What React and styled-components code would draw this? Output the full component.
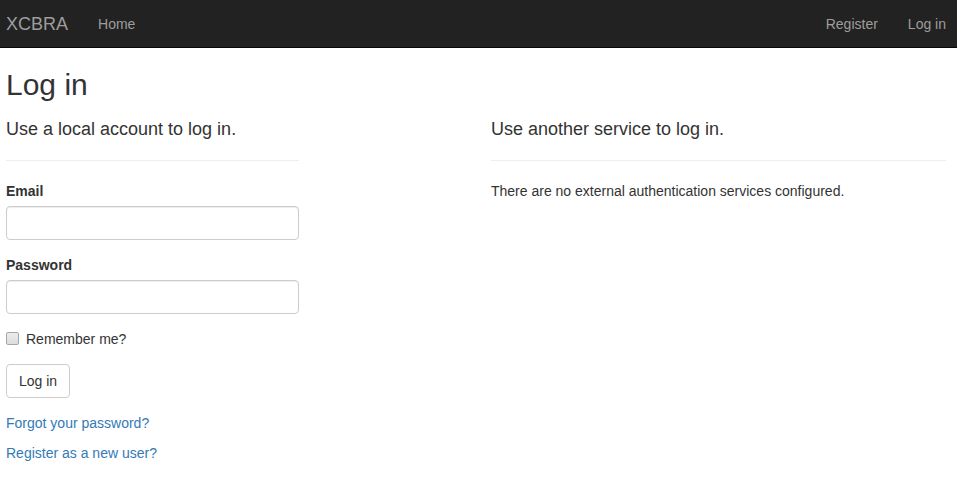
import React from "react";
import styled, { createGlobalStyle } from "styled-components";

const GlobalStyle = createGlobalStyle`
  html, body {
    margin: 0;
    padding: 0;
    background: #fff;
  }
  body {
    font-family: "Liberation Sans", Arial, Helvetica, sans-serif;
    font-size: 14px;
    line-height: 1.42857143;
    color: #333;
  }
  * {
    box-sizing: border-box;
  }
`;

const Navbar = styled.nav`
  height: 48px;
  background: #222;
  border-bottom: 1px solid #080808;
  display: flex;
  align-items: center;
  justify-content: space-between;
  padding: 0 11px 0 6px;
`;

const NavGroup = styled.div`
  display: flex;
  align-items: center;
  gap: 30px;
`;

const Brand = styled.a`
  color: #9d9d9d;
  font-size: 18px;
  line-height: 20px;
  text-decoration: none;
`;

const NavLink = styled.a`
  color: #9d9d9d;
  font-size: 14px;
  line-height: 20px;
  text-decoration: none;
`;

const Page = styled.main`
  padding: 0 11px 20px 6px;
`;

const Title = styled.h2`
  font-size: 30px;
  font-weight: 500;
  line-height: 1.1;
  margin: 20px 0 19px;
`;

const Columns = styled.div`
  display: grid;
  grid-template-columns: 293px 1fr;
  column-gap: 192px;
  align-items: start;
`;

const Section = styled.section`
  display: flex;
  flex-direction: column;
`;

const SubTitle = styled.h4`
  font-size: 18px;
  font-weight: 500;
  line-height: 1.1;
  margin: 0;
`;

const Rule = styled.hr`
  border: 0;
  border-top: 1px solid #eee;
  margin: 20px 0;
`;

const FormGroup = styled.div`
  margin-bottom: 15px;
`;

const Label = styled.label`
  display: block;
  font-weight: 700;
  margin-bottom: 5px;
`;

const Input = styled.input`
  display: block;
  width: 100%;
  height: 34px;
  padding: 6px 12px;
  font: inherit;
  color: #555;
  background: #fff;
  border: 1px solid #ccc;
  border-radius: 4px;
  box-shadow: inset 0 1px 1px rgba(0, 0, 0, 0.075);
`;

const CheckLabel = styled.label`
  display: flex;
  align-items: center;
  gap: 7px;
  line-height: 20px;
  cursor: pointer;
`;

const CheckBox = styled.input`
  appearance: none;
  margin: 0;
  width: 13px;
  height: 13px;
  border: 1px solid #a6a6a6;
  border-radius: 2px;
  background: linear-gradient(#ededed, #dcdcdc);
`;

const Button = styled.button`
  height: 34px;
  padding: 6px 12px;
  font: inherit;
  color: #333;
  background: #fff;
  border: 1px solid #ccc;
  border-radius: 4px;
  cursor: pointer;
`;

const LinkLine = styled.p`
  margin: 0 0 10px;
`;

const TextLink = styled.a`
  color: #337ab7;
  text-decoration: none;
`;

const Note = styled.p`
  margin: 0;
`;

export default function App() {
  return (
    <>
      <GlobalStyle />
      <Navbar>
        <NavGroup>
          <Brand href="#">XCBRA</Brand>
          <NavLink href="#">Home</NavLink>
        </NavGroup>
        <NavGroup>
          <NavLink href="#">Register</NavLink>
          <NavLink href="#">Log in</NavLink>
        </NavGroup>
      </Navbar>
      <Page>
        <Title>Log in</Title>
        <Columns>
          <Section>
            <SubTitle>Use a local account to log in.</SubTitle>
            <Rule />
            <FormGroup>
              <Label htmlFor="email">Email</Label>
              <Input id="email" type="email" />
            </FormGroup>
            <FormGroup>
              <Label htmlFor="password">Password</Label>
              <Input id="password" type="password" />
            </FormGroup>
            <FormGroup>
              <CheckLabel>
                <CheckBox type="checkbox" />
                Remember me?
              </CheckLabel>
            </FormGroup>
            <FormGroup>
              <Button type="submit">Log in</Button>
            </FormGroup>
            <LinkLine>
              <TextLink href="#">Forgot your password?</TextLink>
            </LinkLine>
            <LinkLine>
              <TextLink href="#">Register as a new user?</TextLink>
            </LinkLine>
          </Section>
          <Section>
            <SubTitle>Use another service to log in.</SubTitle>
            <Rule />
            <Note>There are no external authentication services configured.</Note>
          </Section>
        </Columns>
      </Page>
    </>
  );
}
